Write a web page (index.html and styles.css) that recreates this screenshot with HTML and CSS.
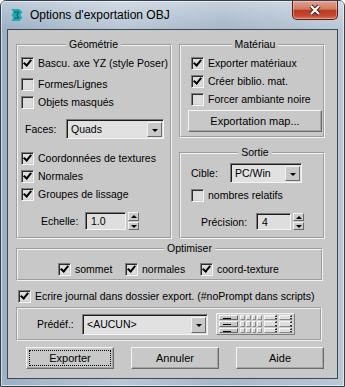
FILE: index.html
```html
<!DOCTYPE html>
<html lang="fr">
<head>
    <meta charset="UTF-8">
    <title>Options d'exportation OBJ</title>
    <link rel="stylesheet" href="styles.css">
</head>
<body>
<div class="window">
    <div class="titlebar">
        <svg class="app-icon" width="14" height="14" viewBox="0 0 14 14">
            <path d="M1 1 H9 L12.5 4 L10.5 7 L12.5 10 L9 13 H1 L3.5 10 L1.5 7 L3.5 4 Z" fill="#1fa9b1"/>
            <path d="M4 4 H8.5 L7 7 L8.5 10 H4" fill="none" stroke="#0b5f68" stroke-width="1.2"/>
        </svg>
        <span class="title">Options d'exportation OBJ</span>
        <div class="close">
            <svg width="14" height="12" viewBox="0 0 14 12">
                <path d="M3 2 L11 10 M11 2 L3 10" stroke="#4a1a14" stroke-width="4.2"/>
                <path d="M3 2 L11 10 M11 2 L3 10" stroke="#ffffff" stroke-width="2.2"/>
            </svg>
        </div>
    </div>

    <div class="client">
        <div class="top">
            <fieldset class="group geo">
                <legend>Géométrie</legend>
                <div class="check"><span class="cb on"></span>Bascu. axe YZ (style Poser)</div>
                <div class="check mt3"><span class="cb"></span>Formes/Lignes</div>
                <div class="check"><span class="cb"></span>Objets masqués</div>
                <div class="field faces">
                    <span class="lbl">Faces:</span>
                    <div class="combo">Quads<span class="drop"></span></div>
                </div>
                <div class="check mt10"><span class="cb on"></span>Coordonnées de textures</div>
                <div class="check"><span class="cb on"></span>Normales</div>
                <div class="check"><span class="cb on"></span>Groupes de lissage</div>
                <div class="field echelle">
                    <span class="lbl">Echelle:</span>
                    <div class="spin-box">1.0</div>
                    <div class="spin-arrows"><span class="up"></span><span class="down"></span></div>
                </div>
            </fieldset>

            <div class="side">
                <fieldset class="group mat">
                    <legend>Matériau</legend>
                    <div class="check"><span class="cb on"></span>Exporter matériaux</div>
                    <div class="check"><span class="cb on"></span>Créer biblio. mat.</div>
                    <div class="check"><span class="cb"></span>Forcer ambiante noire</div>
                    <button class="btn map">Exportation map...</button>
                </fieldset>
                <fieldset class="group sortie">
                    <legend>Sortie</legend>
                    <div class="field cible">
                        <span class="lbl">Cible:</span>
                        <div class="combo">PC/Win<span class="drop"></span></div>
                    </div>
                    <div class="check mt3"><span class="cb"></span>nombres relatifs</div>
                    <div class="field precision">
                        <span class="lbl">Précision:</span>
                        <div class="spin-box">4</div>
                        <div class="spin-arrows"><span class="up"></span><span class="down"></span></div>
                    </div>
                </fieldset>
            </div>
        </div>

        <fieldset class="group optim">
            <legend>Optimiser</legend>
            <div class="optim-row">
                <div class="check"><span class="cb on"></span>sommet</div>
                <div class="check"><span class="cb on"></span>normales</div>
                <div class="check"><span class="cb on"></span>coord-texture</div>
            </div>
        </fieldset>

        <div class="check journal"><span class="cb on"></span>Ecrire journal dans dossier export. (#noPrompt dans scripts)</div>

        <div class="group predef">
            <span class="lbl">Prédéf.:</span>
            <div class="combo">&lt;AUCUN&gt;<span class="drop"></span></div>
            <div class="layout-grid">
                <div class="lg-row"><span class="lg-btn"></span><span class="lg-cell"></span><span class="lg-cell"></span><span class="lg-cell"></span><span class="lg-cell"></span><span class="lg-wide"></span><span class="lg-wide"></span></div>
                <div class="lg-row"><span class="lg-btn"></span><span class="lg-cell"></span><span class="lg-cell"></span><span class="lg-cell"></span><span class="lg-cell"></span><span class="lg-wide"></span><span class="lg-wide"></span></div>
                <div class="lg-row"><span class="lg-btn"></span><span class="lg-cell"></span><span class="lg-cell"></span><span class="lg-cell"></span><span class="lg-cell"></span><span class="lg-wide"></span><span class="lg-wide"></span></div>
            </div>
        </div>

        <div class="actions">
            <button class="btn focus">Exporter</button>
            <button class="btn">Annuler</button>
            <button class="btn">Aide</button>
        </div>
    </div>
</div>
</body>
</html>
```

FILE: styles.css
```css
* {
    box-sizing: border-box;
}
body {
    margin: 0;
    background: #ffffff;
    font-family: "Liberation Sans", Arial, sans-serif;
    font-size: 10.5px;
    color: #000;
}

/* window frame */
.window {
    width: 345px;
    height: 387px;
    display: flex;
    flex-direction: column;
    padding: 0 6px 7px;
    border: 1px solid #33404d;
    border-radius: 6px 6px 0 0;
    background: linear-gradient(90deg, #9cb0c4, #b9c7d5 35%, #a7b8c9 65%, #bac8d6);
    box-shadow: inset 0 0 0 1px rgba(255, 255, 255, 0.55);
}
.titlebar {
    height: 28px;
    display: flex;
    align-items: center;
    background: linear-gradient(180deg, rgba(255,255,255,0.35), rgba(255,255,255,0));
    margin: 0 -6px;
    padding-right: 6px;
    padding-left: 9px;
}
.app-icon {
    flex: none;
}
.title {
    margin-left: 6px;
    font-size: 12px;
    color: #000;
}
.close {
    margin-left: auto;
    align-self: flex-start;
    width: 46px;
    height: 19px;
    border: 1px solid #5b1c14;
    border-top: none;
    border-radius: 0 0 5px 5px;
    background: linear-gradient(180deg, #e2a08f 0%, #d17a64 45%, #b83b24 52%, #c4462e 80%, #d8715a 100%);
    box-shadow: inset 0 0 0 1px rgba(255, 220, 210, 0.45);
    display: flex;
    align-items: center;
    justify-content: center;
}

/* dialog body */
.client {
    flex: 1;
    border: 1px solid #3c4855;
    background: #c8c8c8;
    padding: 8px 12px 0 8px;
}
.top {
    display: grid;
    grid-template-columns: 156px 146px;
    column-gap: 7px;
}
.side {
    display: flex;
    flex-direction: column;
}

.group {
    margin: 0;
    min-width: 0;
    border: 2px groove #f2f2f2;
}
legend {
    margin: 0 auto;
    padding: 0 3px;
    line-height: 13px;
}
.geo {
    padding: 3px 4px 7px 3px;
}
.mat {
    padding: 3px 4px 4px 10px;
}
.sortie {
    flex: 1;
    margin-top: 8px;
    padding: 4px 4px 4px 10px;
}

/* checkbox rows */
.check {
    display: flex;
    align-items: center;
    height: 18px;
    gap: 4px;
    white-space: nowrap;
}
.mt3 {
    margin-top: 3px;
}
.mt10 {
    margin-top: 10px;
}
.cb {
    position: relative;
    flex: none;
    width: 13px;
    height: 13px;
    border: 1px solid;
    border-color: #7c7c7c #f6f6f6 #f6f6f6 #7c7c7c;
    background: #dcdcdc;
    box-shadow: inset 1px 1px 0 #2c2c2c, inset -1px -1px 0 #d0d0d0;
}
.cb.on::after {
    content: "";
    position: absolute;
    left: 3px;
    top: 0px;
    width: 3px;
    height: 6px;
    border: solid #000;
    border-width: 0 2px 2px 0;
    transform: rotate(40deg);
}

/* label + control rows */
.field {
    display: flex;
    align-items: center;
}
.lbl {
    flex: none;
}
.faces {
    height: 20px;
    margin-top: 8px;
}
.faces .lbl {
    margin-left: 4px;
    width: 41px;
}
.faces .combo {
    width: 98px;
}
.echelle {
    height: 18px;
    margin-top: 9px;
}
.echelle .lbl {
    margin-left: 20px;
    width: 44px;
}
.echelle .spin-box {
    width: 41px;
}
.cible {
    height: 20px;
}
.cible .lbl {
    width: 39px;
}
.cible .combo {
    width: 72px;
}
.precision {
    height: 17px;
    margin-top: 9px;
}
.precision .lbl {
    margin-left: 10px;
    width: 55px;
}
.precision .spin-box {
    width: 35px;
}

.combo {
    position: relative;
    height: 100%;
    display: flex;
    align-items: center;
    padding-left: 4px;
    border: 1px solid;
    border-color: #7a7a7a #f4f4f4 #f4f4f4 #7a7a7a;
    background: #e1e1e1;
    box-shadow: inset 1px 1px 0 #1c1c1c;
}
.drop {
    position: absolute;
    right: 1px;
    top: 2px;
    bottom: 1px;
    width: 15px;
    border: 1px solid;
    border-color: #f2f2f2 #6a6a6a #6a6a6a #f2f2f2;
    background: #c8c8c8;
}
.drop::after {
    content: "";
    position: absolute;
    left: 4px;
    top: 6px;
    border-left: 3px solid transparent;
    border-right: 3px solid transparent;
    border-top: 3px solid #000;
}

.spin-box {
    height: 100%;
    display: flex;
    align-items: center;
    padding-left: 5px;
    border: 1px solid;
    border-color: #7a7a7a #f4f4f4 #f4f4f4 #7a7a7a;
    background: #dedede;
    box-shadow: inset 1px 1px 0 #1c1c1c;
}
.spin-arrows {
    margin-left: 2px;
    width: 11px;
    height: 100%;
    display: flex;
    flex-direction: column;
    gap: 1px;
}
.spin-arrows span {
    position: relative;
    flex: 1;
    border: 1px solid;
    border-color: #f2f2f2 #6a6a6a #6a6a6a #f2f2f2;
    background: #cacaca;
}
.spin-arrows span::after {
    content: "";
    position: absolute;
    left: 2px;
    top: 2px;
    border-left: 3px solid transparent;
    border-right: 3px solid transparent;
}
.spin-arrows .up::after {
    border-bottom: 3px solid #000;
}
.spin-arrows .down::after {
    border-top: 3px solid #000;
}

/* push buttons */
.btn {
    height: 22px;
    padding: 0;
    font-family: inherit;
    font-size: 11px;
    color: #000;
    background: #c8c8c8;
    border: 1px solid;
    border-color: #f4f4f4 #6c6c6c #6c6c6c #f4f4f4;
    box-shadow: inset -1px -1px 0 #a4a4a4;
}
.map {
    margin-top: 2px;
    margin-left: -3px;
    width: 134px;
}

/* optimiser */
.optim {
    margin-top: 3px;
    width: 307px;
    padding: 5px 0 1px 40px;
}
.optim-row {
    display: grid;
    grid-template-columns: 67px 75px auto;
}

.journal {
    margin: 6px 0 0 2px;
}

/* presets */
.predef {
    margin-top: 2px;
    width: 306px;
    height: 34px;
    display: flex;
    align-items: center;
    padding-left: 19px;
}
.predef .lbl {
    width: 45px;
}
.predef .combo {
    width: 126px;
    height: 21px;
}
.layout-grid {
    margin-left: 8px;
    width: 79px;
    height: 22px;
    padding: 1px 2px;
    display: flex;
    flex-direction: column;
    gap: 1px;
    border: 1px solid;
    border-color: #f2f2f2 #7c7c7c #7c7c7c #f2f2f2;
    background: #cfcfcf;
}
.lg-row {
    flex: 1;
    display: flex;
    gap: 1px;
}
.lg-btn {
    position: relative;
    width: 19px;
    margin-right: 1px;
    border: 1px solid;
    border-color: #f6f6f6 #666 #666 #f6f6f6;
    background: #c6c6c6;
}
.lg-btn::after {
    content: "";
    position: absolute;
    left: 3px;
    top: 2px;
    width: 8px;
    height: 1px;
    background: #000;
}
.lg-cell {
    width: 5px;
    border: 1px solid;
    border-color: #f6f6f6 #8a8a8a #8a8a8a #f6f6f6;
    background: #d8d8d8;
}
.lg-wide {
    width: 13px;
    margin-left: 1px;
    border: 1px solid;
    border-color: #f6f6f6 #8a8a8a #8a8a8a #f6f6f6;
    border-right: 2px dotted #333;
    background: #dedede;
}

.actions {
    display: flex;
    gap: 17px;
    margin: 6px 0 0 10px;
}
.actions .btn {
    width: 88px;
}
.focus {
    outline: 1px dotted #000;
    outline-offset: -4px;
}
```
